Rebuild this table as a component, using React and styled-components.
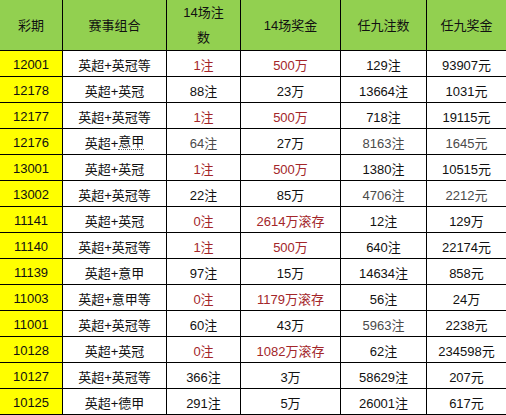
import React from 'react';
import styled, { createGlobalStyle } from 'styled-components';

const GlobalStyle = createGlobalStyle`
    body {
        margin: 0;
        background: #ffffff;
        font-family: "Liberation Sans", "Noto Sans CJK SC", sans-serif;
    }
`;

// cell text colours
const tones = {
    red: '#a3262a',
    grey: '#4a4a4a',
    black: '#111111',
};

const rows = [
    ['12001', '英超+英冠等', ['1注', 'red'], ['500万', 'red'], ['129注'], ['93907元']],
    ['12178', '英超+英冠', ['88注'], ['23万'], ['13664注'], ['1031元']],
    ['12177', '英超+英冠等', ['1注', 'red'], ['500万', 'red'], ['718注'], ['19115元']],
    ['12176', '英超+意甲', ['64注', 'grey'], ['27万'], ['8163注', 'grey'], ['1645元', 'grey'], true],
    ['13001', '英超+英冠', ['1注', 'red'], ['500万', 'red'], ['1380注'], ['10515元']],
    ['13002', '英超+英冠等', ['22注'], ['85万'], ['4706注', 'grey'], ['2212元', 'grey']],
    ['11141', '英超+英冠', ['0注', 'red'], ['2614万滚存', 'red'], ['12注'], ['129万']],
    ['11140', '英超+英冠等', ['1注', 'red'], ['500万', 'red'], ['640注'], ['22174元']],
    ['11139', '英超+意甲', ['97注'], ['15万'], ['14634注'], ['858元']],
    ['11003', '英超+意甲等', ['0注', 'red'], ['1179万滚存', 'red'], ['56注'], ['24万']],
    ['11001', '英超+英冠等', ['60注'], ['43万'], ['5963注', 'grey'], ['2238元']],
    ['10128', '英超+英冠', ['0注', 'red'], ['1082万滚存', 'red'], ['62注'], ['234598元']],
    ['10127', '英超+英冠等', ['366注'], ['3万'], ['58629注'], ['207元']],
    ['10125', '英超+德甲', ['291注'], ['5万'], ['26001注'], ['617元']],
];

function Match({ name, linked }) {
    if (!linked) return name;
    const [head, tail] = name.split('+');
    return (
        <>
            {head}+<KeyWord>{tail}</KeyWord>
        </>
    );
}

function App() {
    return (
        <>
            <GlobalStyle />
            <Table>
                {/* header row */}
                <HeadCell>彩期</HeadCell>
                <HeadCell>赛事组合</HeadCell>
                <HeadCell $wrap>14场注数</HeadCell>
                <HeadCell>14场奖金</HeadCell>
                <HeadCell>任九注数</HeadCell>
                <HeadCell $last>任九奖金</HeadCell>

                {/* data rows */}
                {rows.map(([issue, match, a, b, c, d, linked]) => (
                    <React.Fragment key={issue}>
                        <IssueCell>{issue}</IssueCell>
                        <Cell>
                            <Match name={match} linked={linked} />
                        </Cell>
                        <Cell $tone={a[1]}>{a[0]}</Cell>
                        <Cell $tone={b[1]}>{b[0]}</Cell>
                        <Cell $tone={c[1]}>{c[0]}</Cell>
                        <Cell $tone={d[1]} $last>{d[0]}</Cell>
                    </React.Fragment>
                ))}
            </Table>
        </>
    );
}

const Table = styled.div`
    display: grid;
    grid-template-columns: 63px 104px 74px 100px 86px 79px;
    grid-template-rows: 51px;
    grid-auto-rows: 26px;
    width: 506px;
    font-size: 13px;
`;

const Cell = styled.div`
    box-sizing: border-box;
    display: flex;
    align-items: center;
    justify-content: center;
    text-align: center;
    background: #ffffff;
    color: ${p => tones[p.$tone] || tones.black};
    border-right: ${p => (p.$last ? 'none' : '1px solid #000')};
    border-bottom: 1px solid #000;
    white-space: nowrap;
    padding-top: 1px;
`;

const HeadCell = styled(Cell)`
    background: #92d050;
    color: #111111;
    white-space: normal;
    line-height: 25px;
    padding: ${p => (p.$wrap ? '0 14px' : '0')};
    word-break: break-all;
`;

const IssueCell = styled(Cell)`
    background: #ffff00;
`;

const KeyWord = styled.span`
    border-bottom: 1px dotted #555;
    line-height: 14px;
`;

export default App;
